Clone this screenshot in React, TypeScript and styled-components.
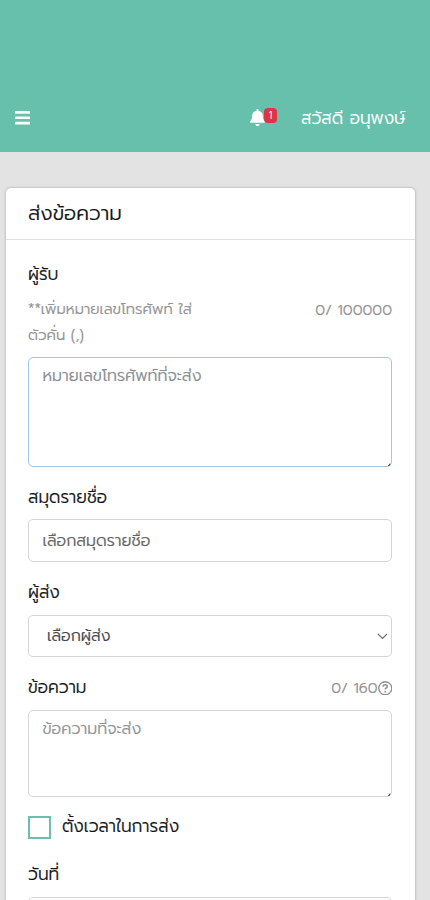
import React from "react";
import styled, { createGlobalStyle } from "styled-components";

const GlobalStyle = createGlobalStyle`
  *, *::before, *::after { box-sizing: border-box; }
  body {
    margin: 0;
    background: #e3e3e3;
    color: #212529;
    font-family: "Prompt", "Noto Sans Thai", "Inter", "Noto Sans", sans-serif;
    font-size: 16px;
    font-weight: 300;
  }
`;

const Screen = styled.div`
  width: 430px;
  height: 900px;
  overflow: hidden;
  background: #e3e3e3;
`;

const TopBar = styled.header`
  display: flex;
  align-items: flex-start;
  height: 152px;
  padding: 104px 24px 0 15px;
  background: #66c0ab;
  color: #fff;
`;

const MenuButton = styled.button`
  display: block;
  margin: 7px auto 0 0;
  padding: 0;
  border: 0;
  background: none;
  line-height: 0;
`;

const Notifications = styled.div`
  display: flex;
  align-items: flex-start;
  margin-right: 24px;
  padding-top: 4px;
`;

const BellIcon = styled.svg`
  display: block;
  margin-top: 1px;
`;

const Count = styled.span`
  width: 13px;
  height: 15px;
  margin-left: -1px;
  border-radius: 4px;
  background: #dc3545;
  font-size: 11px;
  line-height: 15px;
  text-align: center;
`;

const Label = styled.span<{ $size?: number; $color?: string }>`
  white-space: nowrap;
  font-size: ${(p) => p.$size ?? 16}px;
  color: ${(p) => p.$color ?? "inherit"};
  -webkit-text-stroke: 0.2px currentColor;
`;

const FieldName = styled(Label)`
  font-size: 17.1px;
  color: #111315;
`;

const Greeting = styled.div`
  width: 105px;
  line-height: 29px;
`;

const Card = styled.main`
  width: 409px;
  height: 760px;
  margin: 36px 0 0 6px;
  border-radius: 5px;
  background: #fff;
  box-shadow: 0 0 3px rgba(0, 0, 0, 0.28);
`;

const CardHeader = styled.h1`
  display: flex;
  height: 52px;
  margin: 0;
  padding-left: 22px;
  border-bottom: 1px solid #dfdfdf;
  color: #111315;
  font-weight: 300;
  line-height: 52px;
`;

const Form = styled.form`
  display: flex;
  flex-direction: column;
  padding: 22px 23px 0 22px;
`;

const Row = styled.div<{ $height: number; $top?: number }>`
  display: flex;
  justify-content: space-between;
  height: ${(p) => p.$height}px;
  margin-top: ${(p) => p.$top ?? 0}px;
  line-height: 24px;
`;

const Hint = styled.div`
  display: flex;
  flex-direction: column;
  line-height: 25.5px;
`;

const Counter = styled.div`
  display: flex;
  align-items: center;
  height: 26px;
  color: #929292;
`;

const Field = styled.div<{ $height: number; $focused?: boolean; $multi?: boolean; $indent?: number }>`
  display: flex;
  justify-content: space-between;
  align-items: ${(p) => (p.$multi ? "flex-start" : "center")};
  height: ${(p) => p.$height}px;
  padding: ${(p) => (p.$multi ? 5 : 0)}px 3px 0 ${(p) => p.$indent ?? 13.5}px;
  position: relative;
  border: 1px solid ${(p) => (p.$focused ? "#a3c5e9" : "#d6d6d6")};
  border-radius: 5px;
  line-height: 26px;
`;

const Grip = styled.svg`
  position: absolute;
  right: 0;
  bottom: 0;
`;

const CheckRow = styled.label`
  display: flex;
  align-items: center;
  gap: 11px;
  height: 23px;
  margin-top: 19px;
  line-height: 21px;
  ${FieldName} {
    height: 23px;
  }
`;

const Checkbox = styled.span`
  width: 23px;
  height: 23px;
  border: 2px solid #6bc0ac;
`;

const ResizeGrip = () => (
  <Grip width="3" height="3" viewBox="0 0 3 3">
    <path d="M0 2.5H1.5V1H2.5" fill="none" stroke="#555" />
  </Grip>
);

export default function App() {
  return (
    <>
      <GlobalStyle />
      <Screen>
        <TopBar>
          <MenuButton type="button" aria-label="เมนู">
            <svg width="15" height="14" viewBox="0 0 15 14" fill="#fff">
              <rect width="15" height="2.7" rx=".5" />
              <rect y="5.4" width="15" height="2.7" rx=".5" />
              <rect y="10.8" width="15" height="2.7" rx=".5" />
            </svg>
          </MenuButton>
          <Notifications>
            <BellIcon width="15" height="17" viewBox="0 0 448 512" fill="#fff" preserveAspectRatio="none">
              <path d="M224 512c35.32 0 63.97-28.65 63.97-64H160.03c0 35.35 28.65 64 63.97 64zm215.39-149.71c-19.32-20.76-55.47-51.99-55.47-154.29 0-77.7-54.48-139.9-127.94-155.16V32c0-17.67-14.32-32-31.98-32s-31.98 14.33-31.98 32v20.84C118.56 68.1 64.08 130.3 64.08 208c0 102.3-36.15 133.53-55.47 154.29-6 6.45-8.66 14.16-8.61 21.71.11 16.4 12.98 32 32.1 32h383.8c19.12 0 32-15.6 32.1-32 .05-7.55-2.61-15.27-8.61-21.71z" />
            </BellIcon>
            <Count>1</Count>
          </Notifications>
          <Greeting><Label $size={17.1}>สวัสดี อนุพงษ์</Label></Greeting>
        </TopBar>
        <Card>
          <CardHeader><Label $size={20.2}>ส่งข้อความ</Label></CardHeader>
          <Form>
            <Row $height={35}><FieldName>ผู้รับ</FieldName></Row>
            <Row $height={60}>
              <Hint>
                <Label $size={14.9} $color="#929292">**เพิ่มหมายเลขโทรศัพท์ ใส่</Label>
                <Label $size={14.9} $color="#929292">ตัวคั่น (,)</Label>
              </Hint>
              <Counter><Label $size={14.85}>0/ 100000</Label></Counter>
            </Row>
            <Field $height={110} $focused $multi>
              <Label $color="#858b91">หมายเลขโทรศัพท์ที่จะส่ง</Label>
              <ResizeGrip />
            </Field>
            <Row $height={34} $top={18}><FieldName>สมุดรายชื่อ</FieldName></Row>
            <Field $height={43}><Label $color="#606060">เลือกสมุดรายชื่อ</Label></Field>
            <Row $height={35} $top={18}><FieldName>ผู้ส่ง</FieldName></Row>
            <Field $height={42} $indent={18}>
              <Label $color="#40464c">เลือกผู้ส่ง</Label>
              <svg width="11" height="7" viewBox="0 0 11 7" fill="none" stroke="#6c6c6c" strokeWidth="1.1">
                <path d="M1 1l4.5 4.5L10 1" />
              </svg>
            </Field>
            <Row $height={35} $top={18}>
              <FieldName>ข้อความ</FieldName>
              <Counter>
                <Label $size={14.85}>0/ 160</Label>
                <svg width="14.5" height="14.5" viewBox="0 0 14 14" fill="none" stroke="#929292" strokeWidth="1.3">
                  <circle cx="7" cy="7" r="6.3" />
                  <path d="M5 5.5C5 3 9 3 9 5.3C9 6.8 7 6.6 7 8.3" strokeWidth="1.6" />
                  <circle cx="7" cy="10.3" r=".9" fill="#929292" stroke="none" />
                </svg>
              </Counter>
            </Row>
            <Field $height={87} $multi>
              <Label $color="#8c9196">ข้อความที่จะส่ง</Label>
              <ResizeGrip />
            </Field>
            <CheckRow><Checkbox /><FieldName>ตั้งเวลาในการส่ง</FieldName></CheckRow>
            <Row $height={35} $top={23}><FieldName>วันที่</FieldName></Row>
            <Field $height={43} />
          </Form>
        </Card>
      </Screen>
    </>
  );
}
